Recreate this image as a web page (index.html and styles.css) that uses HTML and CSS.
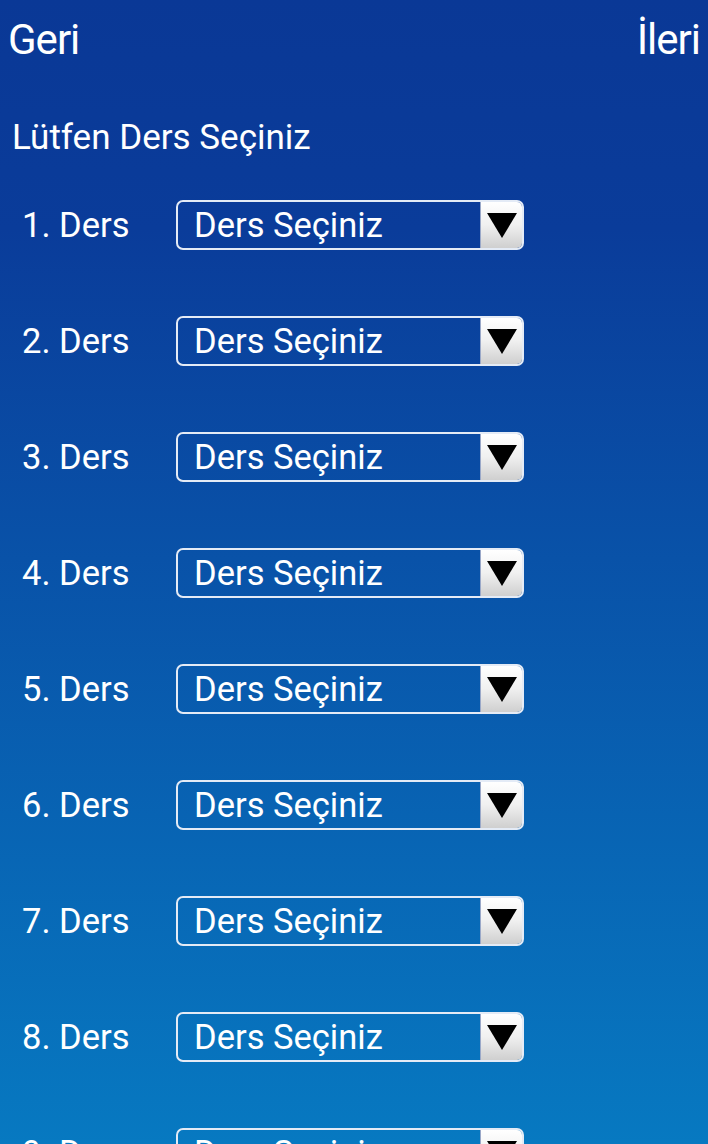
FILE: index.html
```html
<!DOCTYPE html>
<html lang="tr">
<head>
  <meta charset="UTF-8" />
  <title>Ders Seçimi</title>
  <link rel="stylesheet" href="styles.css">
</head>
<body>
  <!-- üst bar -->
  <div class="topbar">
    <a href="#" class="nav-link">Geri</a>
    <a href="#" class="nav-link">İleri</a>
  </div>

  <div class="title">Lütfen Ders Seçiniz</div>

  <!-- ders listesi -->
  <div class="course-list">
    <div class="row"><span class="label">1. Ders</span><div class="select"><span class="select-text">Ders Seçiniz</span><span class="arrow"><span class="tri"></span></span></div></div>
    <div class="row"><span class="label">2. Ders</span><div class="select"><span class="select-text">Ders Seçiniz</span><span class="arrow"><span class="tri"></span></span></div></div>
    <div class="row"><span class="label">3. Ders</span><div class="select"><span class="select-text">Ders Seçiniz</span><span class="arrow"><span class="tri"></span></span></div></div>
    <div class="row"><span class="label">4. Ders</span><div class="select"><span class="select-text">Ders Seçiniz</span><span class="arrow"><span class="tri"></span></span></div></div>
    <div class="row"><span class="label">5. Ders</span><div class="select"><span class="select-text">Ders Seçiniz</span><span class="arrow"><span class="tri"></span></span></div></div>
    <div class="row"><span class="label">6. Ders</span><div class="select"><span class="select-text">Ders Seçiniz</span><span class="arrow"><span class="tri"></span></span></div></div>
    <div class="row"><span class="label">7. Ders</span><div class="select"><span class="select-text">Ders Seçiniz</span><span class="arrow"><span class="tri"></span></span></div></div>
    <div class="row"><span class="label">8. Ders</span><div class="select"><span class="select-text">Ders Seçiniz</span><span class="arrow"><span class="tri"></span></span></div></div>
    <div class="row"><span class="label">9. Ders</span><div class="select"><span class="select-text">Ders Seçiniz</span><span class="arrow"><span class="tri"></span></span></div></div>
  </div>
</body>
</html>
```

FILE: styles.css
```css
html, body {
  margin: 0;
  height: 1144px;
  overflow: hidden;
}

body {
  font-family: Roboto, 'Noto Sans', sans-serif;
  color: #fff;
  background: linear-gradient(to bottom, #0a3896 0%, #0a3c9a 20%, #0779c1 100%);
}

/* üst bar */
.topbar {
  display: flex;
  justify-content: space-between;
  padding: 16px 8px 0 8px;
  height: 54px;
}

.nav-link {
  color: #fff;
  text-decoration: none;
  font-size: 42px;
  line-height: 48px;
  letter-spacing: -1px;
}

.title {
  font-size: 35px;
  line-height: 40px;
  padding: 48px 0 0 12px;
}

/* ders listesi */
.course-list {
  padding-top: 9px;
}

.row {
  display: flex;
  align-items: center;
  height: 116px;
}

.label {
  flex: none;
  width: 176px;
  padding-left: 22px;
  box-sizing: border-box;
  font-size: 34.5px;
}

.select {
  flex: none;
  display: flex;
  width: 348px;
  height: 50px;
  box-sizing: border-box;
  border: 2px solid #e4ebf6;
  border-radius: 7px;
  overflow: hidden;
}

.select-text {
  flex: 1;
  padding-left: 16px;
  font-size: 34.5px;
  line-height: 46px;
}

.arrow {
  width: 41px;
  display: flex;
  align-items: center;
  justify-content: center;
  background: linear-gradient(to bottom, #ffffff 0%, #f0f0f0 50%, #cfcfcf 100%);
  border-left: 1px solid #9aa8c8;
}

.tri {
  width: 0;
  height: 0;
  border-left: 15px solid transparent;
  border-right: 15px solid transparent;
  border-top: 25px solid #000;
}
```
